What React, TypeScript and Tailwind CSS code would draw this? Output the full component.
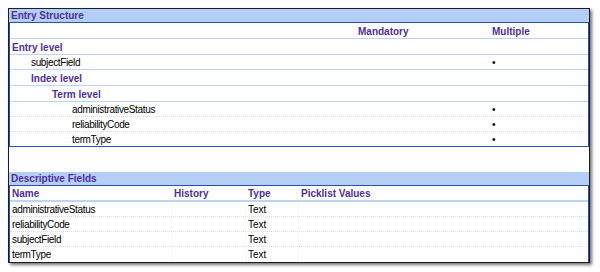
import React from 'react';

const purple = 'text-[#4f2f9c]';

const SectionHeader: React.FC<{ children: React.ReactNode }> = ({ children }) => (
    <div className={`h-[14px] bg-[#b4cef5] border-b border-[#2451b5] pl-[2px] font-bold leading-[14px] ${purple}`}>
        {children}
    </div>
);

type EntryRow = { label: string; indent: string; group?: boolean; multiple?: boolean };

const entryRows: EntryRow[] = [
    { label: 'Entry level', indent: 'pl-[2px]', group: true },
    { label: 'subjectField', indent: 'pl-[21px]', multiple: true },
    { label: 'Index level', indent: 'pl-[21px]', group: true },
    { label: 'Term level', indent: 'pl-[42px]', group: true },
    { label: 'administrativeStatus', indent: 'pl-[62px]', multiple: true },
    { label: 'reliabilityCode', indent: 'pl-[62px]', multiple: true },
    { label: 'termType', indent: 'pl-[62px]', multiple: true },
];

const fields = ['administrativeStatus', 'reliabilityCode', 'subjectField', 'termType'];

const App: React.FC = () => {
    return (
        <div className="w-[600px] h-[272px] bg-white pt-2 pl-2 font-['Liberation_Sans',Arial,sans-serif] text-[10px]">
            <div className="w-[582px] border border-[#1c1c24] shadow-[2px_2px_3px_rgba(0,0,0,0.55)] bg-white overflow-hidden">
                <SectionHeader>Entry Structure</SectionHeader>
                <div className="border-x border-[#2451b5]">
                    <div className={`grid grid-cols-[346px_134px_1fr] h-[16px] border-b border-[#bcd5f7] font-bold leading-[17px] ${purple}`}>
                        <div />
                        <div className="pl-[2px]">Mandatory</div>
                        <div className="pl-[2px]">Multiple</div>
                    </div>
                    {entryRows.map((row, i) => {
                        const last = i === entryRows.length - 1;
                        const next = entryRows[i + 1];
                        const line = last
                            ? 'border-b border-[#2451b5]'
                            : row.group || next?.group
                            ? 'border-b border-[#bcd5f7]'
                            : 'border-b border-dotted border-[#dcdcdc]';
                        return (
                            <div
                                key={row.label}
                                className={`grid grid-cols-[346px_134px_1fr] ${row.group ? 'h-[16px] leading-[18px]' : 'h-[15px] leading-[16px]'} ${line}`}
                            >
                                <div className={`${row.indent} ${row.group ? `font-bold ${purple}` : 'text-black tracking-[-0.35px]'}`}>
                                    {row.label}
                                </div>
                                <div />
                                <div className="pl-[2px] text-black">{row.multiple ? '•' : ''}</div>
                            </div>
                        );
                    })}
                </div>
                <div className="h-[25px]" />
                <SectionHeader>Descriptive Fields</SectionHeader>
                <div className="border-x border-[#2451b5]">
                    <div className={`grid grid-cols-[162px_74px_53px_1fr] h-[16px] border-b-2 border-[#bcd5f7] font-bold leading-[16px] ${purple}`}>
                        <div className="pl-[2px]">Name</div>
                        <div className="pl-[2px]">History</div>
                        <div className="pl-[2px]">Type</div>
                        <div className="pl-[2px]">Picklist Values</div>
                    </div>
                    {fields.map((name, i) => (
                        <div
                            key={name}
                            className={`grid grid-cols-[162px_74px_53px_1fr] h-[15px] leading-[15px] text-black ${
                                i < fields.length - 1 ? 'border-b border-dotted border-[#dcdcdc]' : ''
                            }`}
                        >
                            <div className="pl-[2px] tracking-[-0.35px] border-r border-dotted border-[#f0f0f0]">{name}</div>
                            <div className="border-r border-dotted border-[#f0f0f0]" />
                            <div className="pl-[2px] border-r border-dotted border-[#f0f0f0]">Text</div>
                            <div />
                        </div>
                    ))}
                </div>
            </div>
        </div>
    );
};

export default App;
